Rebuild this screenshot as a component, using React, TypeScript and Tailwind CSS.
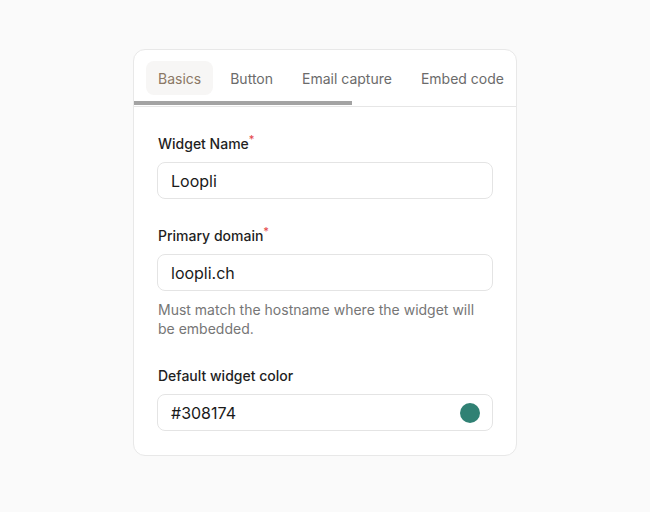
import React from "react";

function Field({ label, value, required, help, swatch, className }: { label: string; value: string; required?: boolean; help?: string; swatch?: string; className?: string }) {
  return (
    <div className={"flex flex-col " + (className ?? "")}>
      <div className="text-[14px] leading-5 font-medium text-[#1f1f1f] pl-px">
        {label}
        {required && <span className="text-[#e5484d] align-top text-[11px] leading-3 relative top-[-1px]">*</span>}
      </div>
      <div className="mt-[8px] h-[37px] w-full rounded-lg border border-[#e4e4e4] bg-white flex items-center pl-[13px] pr-[12px] justify-between">
        <span className="text-[16px] text-[#1a1a1a]">{value}</span>
        {swatch && <span className="w-5 h-5 rounded-full" style={{ backgroundColor: swatch }} />}
      </div>
      {help && <div className="mt-[9px] text-[14px] leading-[19px] text-[#767676] pl-px pr-4">{help}</div>}
    </div>
  );
}

export default function App() {
  const tabs = ["Basics", "Button", "Email capture", "Embed code"];
  return (
    <div className="w-[650px] h-[512px] bg-[#fafafa] flex justify-center pt-[49px]" style={{ fontFamily: "Inter, 'Noto Sans', sans-serif" }}>
      <div className="w-[384px] h-[407px] bg-white border border-[#e8e8e8] rounded-xl overflow-hidden flex flex-col">
        <div className="relative border-b border-[#e6e6e6] h-[57px]">
          <div className="flex items-center gap-[5px] pt-[11px] pl-[12px] whitespace-nowrap overflow-hidden">
            {tabs.map((t, i) => (
              <div
                key={t}
                className={
                  "h-[34px] px-3 flex items-center rounded-lg text-[14px] shrink-0 " +
                  (i === 0 ? "bg-[#f7f6f5] text-[#8b7865]" : "text-[#6b6b6b]")
                }
              >
                {t}
              </div>
            ))}
          </div>
          <div className="absolute left-0 bottom-[1px] w-[218px] h-[4px] bg-[#a3a3a3]" />
        </div>
        <div className="px-[23px] pt-[27px] flex flex-col">
          <Field label="Widget Name" value="Loopli" required />
          <Field className="mt-[27px]" label="Primary domain" value="loopli.ch" required help="Must match the hostname where the widget will be embedded." />
          <Field className="mt-[28px]" label="Default widget color" value="#308174" swatch="#308174" />
        </div>
      </div>
    </div>
  );
}
